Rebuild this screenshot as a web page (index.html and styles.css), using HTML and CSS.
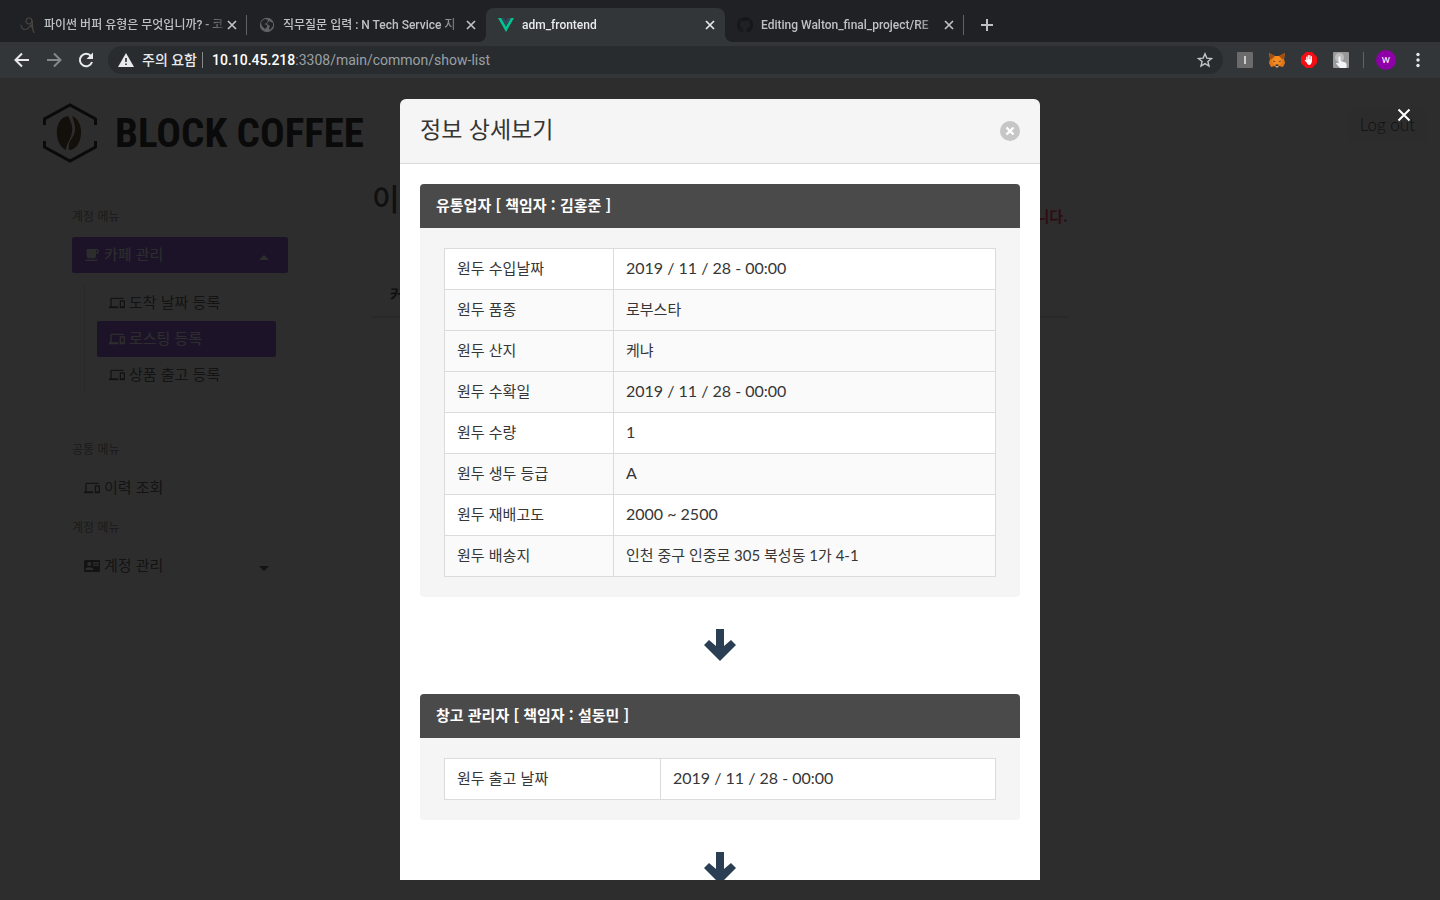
FILE: index.html
```html
<!DOCTYPE html>
<html lang="ko">
<head>
<meta charset="utf-8">
<title>adm_frontend</title>
<link rel="stylesheet" href="styles.css">
</head>
<body>
<svg class="sprite" aria-hidden="true">
  <symbol id="x" viewBox="0 0 16 16"><path d="M4 4l8 8M12 4l-8 8" stroke="currentColor" stroke-width="1.7" fill="none"/></symbol>
  <symbol id="devices" viewBox="0 0 24 24"><path fill="currentColor" d="M4 6h18V4H4c-1.100 0-2 .9-2 2v11H0v3h14v-3H4V6zm19 2h-6c-.55 0-1 .45-1 1v10c0 .55.45 1 1 1h6c.55 0 1-.45 1-1V9c0-.55-.45-1-1-1zm-1 9h-4v-7h4v7z"/></symbol>
  <symbol id="arrow" viewBox="0 0 32 32"><path fill="#2a3f54" d="M12 0h8v17l7-6 5 5-16 16L0 16l5-5 7 6z"/></symbol>
</svg>

<header class="chrome">
  <div class="tabs">
    <div class="tab">
      <svg class="favicon" viewBox="0 0 16 16" fill="none" stroke="#4b4540" stroke-width="1.200"><circle cx="9" cy="4" r="3"/><path d="M1 8c1 6 6 6 10 0c1 2 2 4 3 8M12 3l1 11"/></svg>
      <button class="tab-title">파이썬 버퍼 유형은 무엇입니까? - 코</button>
      <button class="tab-close" aria-label="탭 닫기"><svg><use href="#x"/></svg></button>
    </div>
    <div class="tab">
      <svg class="favicon" viewBox="0 0 16 16"><circle cx="8" cy="8" r="7.200" fill="#5f6368"/><path fill="#202124" d="M3 4l3-2 3 1-1 3-3 1 3 1v2l-2 2-3-3-1-3zM10 4l4 2v3l-3 4-1-2 1-2-3-2z"/></svg>
      <button class="tab-title">직무질문 입력 : N Tech Service 지</button>
      <button class="tab-close" aria-label="탭 닫기"><svg><use href="#x"/></svg></button>
    </div>
    <div class="tab active">
      <svg class="favicon" viewBox="0 0 16 16"><path fill="#00c58e" d="M0 1h3.200L8 9.500 12.800 1H16L8 15z"/><path fill="#35495e" d="M3.200 1h3L8 4.200 9.800 1h3L8 9.500z"/></svg>
      <button class="tab-title">adm_frontend</button>
      <button class="tab-close" aria-label="탭 닫기"><svg><use href="#x"/></svg></button>
    </div>
    <div class="tab">
      <svg class="favicon" viewBox="0 0 16 16"><path fill="#15171a" d="M8 0C3.580 0 0 3.580 0 8c0 3.540 2.290 6.530 5.470 7.590.4.070.55-.17.55-.38v-1.490c-2.010.37-2.530-.49-2.690-.94-.09-.23-.48-.94-.82-1.130-.28-.15-.68-.52-.01-.53.63-.01 1.080.58 1.230.82.72 1.210 1.870.87 2.330.66.070-.52.280-.87.510-1.070-1.780-.2-3.640-.89-3.640-3.950 0-.87.310-1.590.82-2.150-.08-.2-.36-1.020.08-2.120 0 0 .67-.21 2.200.82.640-.18 1.320-.27 2-.27s1.360.09 2 .27c1.530-1.040 2.200-.82 2.200-.82.440 1.100.16 1.920.08 2.120.51.56.82 1.270.82 2.150 0 3.070-1.870 3.750-3.650 3.950.29.25.54.73.54 1.480v2.200c0 .21.150.46.55.38A8 8 0 0 0 8 0z"/></svg>
      <button class="tab-title">Editing Walton_final_project/RE</button>
      <button class="tab-close" aria-label="탭 닫기"><svg><use href="#x"/></svg></button>
    </div>
    <button class="new-tab" aria-label="새 탭"><svg viewBox="0 0 16 16"><path d="M8 2v12M2 8h12" stroke="currentColor" stroke-width="2"/></svg></button>
  </div>
  <div class="toolbar">
    <button class="tool" aria-label="뒤로"><svg viewBox="0 0 20 20"><path d="M17 10H4M10 3.500L3.500 10l6.500 6.500" stroke="currentColor" stroke-width="2" fill="none"/></svg></button>
    <button class="tool dim" aria-label="앞으로"><svg viewBox="0 0 20 20"><path d="M3 10h13M10 3.500l6.500 6.500-6.500 6.500" stroke="currentColor" stroke-width="2" fill="none"/></svg></button>
    <button class="tool" aria-label="새로고침"><svg viewBox="0 0 20 20"><path d="M15 6.200A6.200 6.200 0 1 0 16 12" stroke="currentColor" stroke-width="2" fill="none"/><path d="M17 2.500V9h-6.500z" fill="currentColor"/></svg></button>
    <div class="omnibox">
      <svg class="warn" viewBox="0 0 16 14"><path fill="#e8eaed" d="M8 0l8 14H0z"/><path stroke="#282c2f" stroke-width="1.600" d="M8 5v4M8 10.500v1.600"/></svg>
      <span class="security">주의 요함</span>
      <div class="url" role="textbox" aria-label="주소"><b>10.10.45.218</b>:3308/main/common/show-list</div>
      <button class="tool star" aria-label="북마크"><svg viewBox="0 0 20 20"><path d="M10 3.800l1.800 4.300 4.700.4-3.600 3 1.100 4.600-4-2.500-4 2.500 1.100-4.600-3.600-3 4.700-.4z" stroke="currentColor" stroke-width="1.400" fill="none"/></svg></button>
    </div>
    <div class="extensions">
      <button class="ext" aria-label="확장 프로그램 1"><svg viewBox="0 0 16 16"><rect width="16" height="16" rx="1" fill="#6b6b6b"/><path d="M8 4v8" stroke="#fff" stroke-width="1.300"/></svg></button>
      <button class="ext" aria-label="MetaMask"><svg viewBox="0 0 16 16"><path fill="#e2761b" d="M0 1l6 3h4l6-3-1 6 1 4-2 4-4-1-1 1H7l-1-1-4 1-2-4 1-4z"/><path fill="#a04f12" d="M0 1l6 3-4 3.500-1-1zM16 1l-6 3 4 3.500 1-1z"/><path fill="#f68b1f" d="M6 4h4l3 5-2 4H5L3 9z"/><path fill="#233447" d="M4.500 8.500l2 1-2 .5zM11.500 8.500l-2 1 2 .5zM6.500 12.500h3l-.5 1.500H7z"/><path fill="#c0ad9e" d="M6.500 14h3l-.5 1.500H7z"/></svg></button>
      <button class="ext" aria-label="AdBlock"><svg viewBox="0 0 16 16"><path fill="#f40d12" d="M5 0h6l5 5v6l-5 5H5l-5-5V5z"/><path d="M5.800 8V5M7.300 8V3.500M8.900 8V3.500M10.400 8.500V4.500M5.500 9.500L4.300 8.300" stroke="#fff" stroke-width="1.200" stroke-linecap="round"/><path fill="#fff" d="M5.200 7.500h5.800c.2 3-1 5.500-2.900 5.500-1.800 0-2.700-2.500-2.900-5.500z"/></svg></button>
      <button class="ext" aria-label="확장 프로그램 4"><svg viewBox="0 0 16 16"><rect width="16" height="16" rx="1" fill="#999"/><circle cx="6.500" cy="5.500" r="4.500" fill="#bdbdbd"/><path fill="#f1f5fa" d="M5.500 5q1-1.500 2 0v4l5 1.500q1.500.5 1 5.500H7l-4-4.500q.5-1.500 2.500 0z"/></svg></button>
    </div>
    <button class="avatar" aria-label="프로필">w</button>
    <button class="tool" aria-label="메뉴"><svg viewBox="0 0 20 20" fill="currentColor"><circle cx="10" cy="4.500" r="1.700"/><circle cx="10" cy="10" r="1.700"/><circle cx="10" cy="15.500" r="1.700"/></svg></button>
  </div>
</header>

<div class="viewport">
  <div class="page">
    <nav class="navbar">
      <a class="brand" href="#">
        <svg viewBox="0 0 54 60"><path d="M1.500 22v-6L27 2l25.500 14v6M1.500 38v6L27 58l25.500-14v-6" fill="none" stroke="#0a0a0a" stroke-width="3"/><path fill="#4a2a10" d="M25 13c-15 2-14 29-2 34 0-7 8-14 6-24-1-4-2-7-4-10zM29 13c4 10 4 17 0 22-3 4-4 8-3 12 14 0 17-29 3-34z"/></svg>
        <span>BLOCK COFFEE</span>
      </a>
      <button class="logout">Log out</button>
    </nav>
    <div class="columns">
      <aside class="menu">
        <p class="menu-label">계정 메뉴</p>
        <a class="item on" href="#"><svg class="ico" viewBox="0 0 24 24"><path fill="currentColor" d="M20 3H4v10c0 2.200 1.800 4 4 4h6c2.200 0 4-1.800 4-4v-3h2c1.100 0 2-.9 2-2V5c0-1.100-.9-2-2-2zm0 5h-2V5h2v3zM2 21h18v-2H2v2z"/></svg><span>카페 관리</span><i class="caret up"></i></a>
        <div class="sub">
          <a class="item" href="#"><svg class="ico"><use href="#devices"/></svg><span>도착 날짜 등록</span></a>
          <a class="item on" href="#"><svg class="ico"><use href="#devices"/></svg><span>로스팅 등록</span></a>
          <a class="item" href="#"><svg class="ico"><use href="#devices"/></svg><span>상품 출고 등록</span></a>
        </div>
        <p class="menu-label">공통 메뉴</p>
        <a class="item" href="#"><svg class="ico"><use href="#devices"/></svg><span>이력 조회</span></a>
        <p class="menu-label">계정 메뉴</p>
        <a class="item" href="#"><svg class="ico" viewBox="0 0 24 24"><path fill="currentColor" fill-rule="evenodd" d="M2 3h20q2 0 2 2v14q0 2-2 2H2q-2 0-2-2V5q0-2 2-2zm6 3a3 3 0 1 0 0 6 3 3 0 0 0 0-6zm6 6h8V6h-8v6zm0 6v-1c0-2-4-3.100-6-3.100S2 15 2 17v1z"/><path fill="currentColor" d="M15 7h6v1h-6zM15 9.500h6v1h-6z"/></svg><span>계정 관리</span><i class="caret"></i></a>
      </aside>
      <main class="main">
        <div class="heading"><h1>이</h1><p>니다.</p></div>
        <div class="list-head">커</div>
      </main>
    </div>
  </div>

  <div class="modal">
    <section class="card" role="dialog" aria-label="정보 상세보기">
      <header class="card-head">
        <h2>정보 상세보기</h2>
        <button class="delete" aria-label="닫기"><svg viewBox="0 0 20 20"><path d="M6.500 6.500l7 7M13.500 6.500l-7 7" stroke="#fff" stroke-width="2.400"/></svg></button>
      </header>
      <div class="card-body">
        <article class="message">
          <h3>유통업자 [ 책임자 : 김홍준 ]</h3>
          <div class="message-body">
            <table class="importer">
              <tr><th scope="row">원두 수입날짜</th><td>2019 / 11 / 28 - 00:00</td></tr>
              <tr class="shade"><th scope="row">원두 품종</th><td class="ko">로부스타</td></tr>
              <tr class="shade"><th scope="row">원두 산지</th><td class="ko">케냐</td></tr>
              <tr class="shade"><th scope="row">원두 수확일</th><td>2019 / 11 / 28 - 00:00</td></tr>
              <tr><th scope="row">원두 수량</th><td>1</td></tr>
              <tr class="shade"><th scope="row">원두 생두 등급</th><td>A</td></tr>
              <tr><th scope="row">원두 재배고도</th><td>2000 ~ 2500</td></tr>
              <tr class="shade"><th scope="row">원두 배송지</th><td class="ko">인천 중구 인중로 305 북성동 1가 4-1</td></tr>
            </table>
          </div>
        </article>
        <svg class="down"><use href="#arrow"/></svg>
        <article class="message">
          <h3>창고 관리자 [ 책임자 : 설동민 ]</h3>
          <div class="message-body">
            <table class="storage">
              <tr><th scope="row">원두 출고 날짜</th><td>2019 / 11 / 28 - 00:00</td></tr>
            </table>
          </div>
        </article>
        <svg class="down"><use href="#arrow"/></svg>
      </div>
    </section>
    <button class="modal-close" aria-label="닫기"><svg viewBox="0 0 14 14"><path d="M1.500 1.500l11 11M12.500 1.500l-11 11" stroke="#fff" stroke-width="2"/></svg></button>
  </div>
</div>
</body>
</html>
```
FILE: styles.css
```css
* { box-sizing: border-box; }
body {
  margin: 0;
  height: 100vh;
  display: flex;
  flex-direction: column;
  overflow: hidden;
  background: #fff;
  color: #363636;
  font: 15px/24px "Noto Sans CJK KR", sans-serif;
}
button { border: 0; padding: 0; background: none; color: inherit; font: inherit; }
a { color: inherit; text-decoration: none; }
h1, h2, h3, p { margin: 0; }
svg { display: block; flex: none; }
.sprite { position: absolute; width: 0; height: 0; }

/* browser frame */
.chrome { font-family: Roboto, "Noto Sans CJK KR", sans-serif; color: #e8eaed; background: #202124; }
.tabs { display: flex; align-items: center; height: 42px; padding: 8px 8px 0; }
.tab {
  position: relative;
  display: flex;
  align-items: center;
  flex: 0 1 239px;
  min-width: 0;
  height: 34px;
  padding: 0 7px 0 12px;
  color: #bdc1c6;
  font-size: 12px;
  font-weight: 500;
}
.tab.active { background: #323639; border-radius: 8px 8px 0 0; color: #e8eaed; }
.tab.active::before, .tab.active::after {
  content: "";
  position: absolute;
  bottom: 0;
  width: 8px;
  height: 8px;
}
.tab.active::before { left: -8px; background: radial-gradient(circle at 0 0, transparent 8px, #323639 8px); }
.tab.active::after { right: -8px; background: radial-gradient(circle at 100% 0, transparent 8px, #323639 8px); }
.tab:first-child::after, .tab:nth-child(4)::after {
  content: "";
  position: absolute;
  right: 0;
  top: 7px;
  width: 1px;
  height: 20px;
  background: #5f6368;
}
.favicon { width: 16px; height: 16px; margin-right: 8px; }
.tab-title {
  flex: 1;
  min-width: 0;
  overflow: hidden;
  white-space: nowrap;
  text-align: left;
  -webkit-mask-image: linear-gradient(90deg, #000 calc(100% - 24px), rgba(0, 0, 0, 0.2));
  mask-image: linear-gradient(90deg, #000 calc(100% - 24px), rgba(0, 0, 0, 0.2));
}
.tab-close, .tab-close svg { width: 16px; height: 16px; }
.new-tab { width: 16px; height: 16px; margin-left: 15px; color: #bdc1c6; }
.new-tab svg { width: 16px; height: 16px; }
.toolbar { display: flex; align-items: center; gap: 12px; height: 36px; padding: 0 12px; background: #323639; }
.tool, .tool svg { width: 20px; height: 20px; }
.dim { color: #85888b; }
.omnibox {
  display: flex;
  align-items: center;
  flex: 1;
  min-width: 0;
  height: 28px;
  padding: 0 8px 0 10px;
  border-radius: 14px;
  background: #282c2f;
  font-size: 14px;
}
.warn { width: 16px; height: 14px; }
.security { padding: 0 5px 0 8px; margin-right: 9px; border-right: 1px solid #85888b; line-height: 16px; white-space: nowrap; font-weight: 500; }
.url { flex: 1; min-width: 0; overflow: hidden; white-space: nowrap; color: #9aa0a6; }
.url b { font-weight: 500; color: #fff; }
.star { color: #c4c7ca; }
.extensions { display: flex; align-items: center; gap: 16px; height: 16px; padding: 0 14px 0 2px; border-right: 1px solid #5f6368; }
.ext, .ext svg { width: 16px; height: 16px; }
.avatar { width: 20px; height: 20px; border-radius: 50%; background: #8e00a8; color: #fff; font-size: 11px; line-height: 20px; text-align: center; }

/* page behind the dialog */
.viewport { position: relative; flex: 1; min-height: 0; overflow: hidden; }
.navbar { display: flex; justify-content: space-between; align-items: flex-start; padding: 25px 13px 0 43px; }
.brand { display: flex; align-items: center; gap: 18px; color: #0a0a0a; font: bold 41px/60px "Roboto Condensed", "Liberation Sans Narrow", sans-serif; white-space: nowrap; }
.brand svg { width: 54px; height: 60px; }
.logout { margin-top: 5px; padding: 5px 12px; border-radius: 4px; background: #f5f5f5; font: 300 17px/24px Lato, sans-serif; }
.columns { display: grid; grid-template-columns: 216px minmax(0, 696px); column-gap: 84px; padding: 18px 72px 0; }
.menu { padding-top: 26px; color: #4a4a4a; }
.menu-label { margin: 12px 0; color: #7a7a7a; font-size: 12px; line-height: 18px; }
.menu-label:first-child { margin-top: 0; }
.item { display: flex; align-items: center; gap: 4px; height: 36px; padding: 0 12px; border-radius: 2px; line-height: 22px; }
.item span { flex: 1; padding-bottom: 2px; }
.item.on { background: #8648e0; color: #fff; }
.ico { width: 16px; height: 16px; }
.caret { width: 0; margin: 5px 7px 0; border: 5px solid transparent; border-top-color: currentColor; border-bottom-width: 0; }
.caret.up { border-width: 0 5px 5px; border-bottom-color: currentColor; }
.sub { margin: 12px 12px 47px; padding-left: 12px; border-left: 1px solid #dbdbdb; }
.heading { display: flex; justify-content: space-between; align-items: flex-end; height: 47px; }
.heading h1 { align-self: flex-start; font-size: 30px; line-height: 32px; font-weight: 500; }
.heading p { color: #ff1f55; font-weight: 700; }
.list-head { margin-top: 54px; padding: 0 18px 10px; border-bottom: 2px solid #dbdbdb; font-weight: 700; }

/* dialog */
.modal {
  position: absolute;
  inset: 0;
  display: flex;
  align-items: center;
  justify-content: center;
  background: rgba(10, 10, 10, 0.86);
}
.card { display: flex; flex-direction: column; width: 640px; max-width: 100%; max-height: calc(100% - 41px); border-radius: 6px 6px 0 0; overflow: hidden; }
.card-head { display: flex; align-items: center; justify-content: space-between; flex: none; min-height: 65px; padding: 17px 20px; background: #f5f5f5; border-bottom: 1px solid #dbdbdb; }
.card-head h2 { padding-bottom: 6px; font-size: 23px; line-height: 24px; font-weight: 400; }
.delete { border-radius: 50%; background: #c6c6c6; }
.delete, .delete svg { width: 20px; height: 20px; }
.card-body { flex: 1; min-height: 0; overflow: hidden; padding: 20px; background: #fff; }
.message { border-radius: 4px; overflow: hidden; background: #f5f5f5; }
.message h3 { padding: 9px 16px 11px; background: #4a4a4a; color: #fff; font-size: 15px; line-height: 24px; font-weight: 700; }
.message-body { padding: 20px 24px; }
table { width: 100%; border-collapse: collapse; table-layout: fixed; background: #fff; }
th, td { height: 41px; padding: 7px 12px 9px; border: 1px solid #dbdbdb; text-align: left; line-height: 24px; }
th { font-weight: 400; }
.importer th { width: 169px; }
.storage th { width: 216px; }
td { font-family: Lato, "Noto Sans CJK KR", sans-serif; font-size: 16px; }
td.ko { font-size: 15px; }
.shade { background: #fafafa; }
.down { width: 32px; height: 32px; margin: 32px auto 33px; }
.modal-close { position: absolute; top: 30px; right: 29px; }
.modal-close svg { width: 14px; height: 14px; }
```
